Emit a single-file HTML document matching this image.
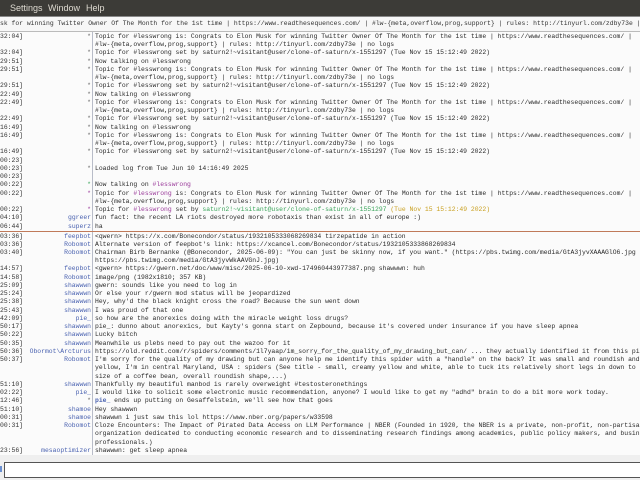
<!DOCTYPE html>
<html><head><meta charset="utf-8"><style>
*{margin:0;padding:0;box-sizing:border-box}
body{width:640px;height:480px;overflow:hidden;background:#efefef;position:relative;font-family:"Liberation Mono",monospace}
#menu{position:absolute;left:0;top:0;width:640px;height:16px;background:#3c3b37;color:#dfdbd2;font:9px "Liberation Sans",sans-serif}
#menu span{position:absolute;top:3px}
#topic{position:absolute;left:0;top:16px;width:640px;height:16px;background:#f7f7f7;border-top:1px solid #888;border-bottom:1px solid #bbb;font-size:6.4px;line-height:14px;color:#333;white-space:pre;overflow:hidden}
#chat{position:absolute;left:0;top:32px;width:640px;height:423px;background:#fbfbfb;overflow:hidden}
#vsep{position:absolute;left:92px;top:0;width:1px;height:423px;background:#b8bcc8}
.r{position:absolute;left:0;height:8.24px;width:640px;font-size:6.4px;line-height:8.24px;white-space:pre;color:#2a2a2a}
.t{position:absolute;left:0;color:#333}
.n{position:absolute;right:549px;color:#4a62b0;text-align:right}
.m{position:absolute;left:95px}
.g{color:#3aa55a}.p{color:#9a3a9a}.y{color:#c9a020}
#mark{position:absolute;left:0;top:198.5px;width:640px;height:1px;background:#c07a5a}
#input{position:absolute;left:4px;top:462px;width:640px;height:16px;background:#fff;border:1px solid #555}
#blue{position:absolute;left:0;top:466px;width:2px;height:6px;background:#6a8fd0}
</style></head><body>
<div id="menu"><span style="left:-3px">r</span><span style="left:10px">Settings</span><span style="left:48px">Window</span><span style="left:86px">Help</span></div>
<div id="topic">sk for winning Twitter Owner Of The Month for the 1st time | https://www.readthesequences.com/ | #lw-{meta,overflow,prog,support} | rules: http://tinyurl.com/zdby73e | no logs</div>
<div id="chat">
<div id="vsep"></div>
<div id="mark"></div>
<div class="r" style="top:1px"><span class="t">32:04]</span><span class="n" style="color:#666">*</span><span class="m">Topic for #lesswrong is: Congrats to Elon Musk for winning Twitter Owner Of The Month for the 1st time | https://www.readthesequences.com/ |</span></div>
<div class="r" style="top:9.24px"><span class="m">#lw-{meta,overflow,prog,support} | rules: http://tinyurl.com/zdby73e | no logs</span></div>
<div class="r" style="top:17.48px"><span class="t">32:04]</span><span class="n" style="color:#666">*</span><span class="m">Topic for #lesswrong set by saturn2!~visitant@user/clone-of-saturn/x-1551297 (Tue Nov 15 15:12:49 2022)</span></div>
<div class="r" style="top:25.72px"><span class="t">29:51]</span><span class="n" style="color:#666">*</span><span class="m">Now talking on #lesswrong</span></div>
<div class="r" style="top:33.96px"><span class="t">29:51]</span><span class="n" style="color:#666">*</span><span class="m">Topic for #lesswrong is: Congrats to Elon Musk for winning Twitter Owner Of The Month for the 1st time | https://www.readthesequences.com/ |</span></div>
<div class="r" style="top:42.2px"><span class="m">#lw-{meta,overflow,prog,support} | rules: http://tinyurl.com/zdby73e | no logs</span></div>
<div class="r" style="top:50.44px"><span class="t">29:51]</span><span class="n" style="color:#666">*</span><span class="m">Topic for #lesswrong set by saturn2!~visitant@user/clone-of-saturn/x-1551297 (Tue Nov 15 15:12:49 2022)</span></div>
<div class="r" style="top:58.68px"><span class="t">22:49]</span><span class="n" style="color:#666">*</span><span class="m">Now talking on #lesswrong</span></div>
<div class="r" style="top:66.92px"><span class="t">22:49]</span><span class="n" style="color:#666">*</span><span class="m">Topic for #lesswrong is: Congrats to Elon Musk for winning Twitter Owner Of The Month for the 1st time | https://www.readthesequences.com/ |</span></div>
<div class="r" style="top:75.16px"><span class="m">#lw-{meta,overflow,prog,support} | rules: http://tinyurl.com/zdby73e | no logs</span></div>
<div class="r" style="top:83.4px"><span class="t">22:49]</span><span class="n" style="color:#666">*</span><span class="m">Topic for #lesswrong set by saturn2!~visitant@user/clone-of-saturn/x-1551297 (Tue Nov 15 15:12:49 2022)</span></div>
<div class="r" style="top:91.64px"><span class="t">16:49]</span><span class="n" style="color:#666">*</span><span class="m">Now talking on #lesswrong</span></div>
<div class="r" style="top:99.88px"><span class="t">16:49]</span><span class="n" style="color:#666">*</span><span class="m">Topic for #lesswrong is: Congrats to Elon Musk for winning Twitter Owner Of The Month for the 1st time | https://www.readthesequences.com/ |</span></div>
<div class="r" style="top:108.12px"><span class="m">#lw-{meta,overflow,prog,support} | rules: http://tinyurl.com/zdby73e | no logs</span></div>
<div class="r" style="top:116.36px"><span class="t">16:49]</span><span class="n" style="color:#666">*</span><span class="m">Topic for #lesswrong set by saturn2!~visitant@user/clone-of-saturn/x-1551297 (Tue Nov 15 15:12:49 2022)</span></div>
<div class="r" style="top:124.6px"><span class="t">00:23]</span></div>
<div class="r" style="top:132.84px"><span class="t">00:23]</span><span class="n" style="color:#666">*</span><span class="m">Loaded log from Tue Jun 10 14:16:49 2025</span></div>
<div class="r" style="top:141.08px"><span class="t">00:23]</span></div>
<div class="r" style="top:149.32px"><span class="t">00:22]</span><span class="n g">*</span><span class="m">Now talking on <span class="p">#lesswrong</span></span></div>
<div class="r" style="top:157.56px"><span class="t">00:22]</span><span class="n p">*</span><span class="m">Topic for <span class="p">#lesswrong</span> is: Congrats to Elon Musk for winning Twitter Owner Of The Month for the 1st time | https://www.readthesequences.com/ |</span></div>
<div class="r" style="top:165.8px"><span class="m">#lw-{meta,overflow,prog,support} | rules: http://tinyurl.com/zdby73e | no logs</span></div>
<div class="r" style="top:174.04px"><span class="t">00:22]</span><span class="n p">*</span><span class="m">Topic for <span class="p">#lesswrong</span> set by <span class="g">saturn2!~visitant@user/clone-of-saturn/x-1551297</span> <span class="y">(Tue Nov 15 15:12:49 2022)</span></span></div>
<div class="r" style="top:182.28px"><span class="t">04:10]</span><span class="n">ggreer</span><span class="m">fun fact: the recent LA riots destroyed more robotaxis than exist in all of europe :)</span></div>
<div class="r" style="top:190.52px"><span class="t">06:44]</span><span class="n">superz</span><span class="m">ha</span></div>
<div class="r" style="top:200.5px"><span class="t">03:36]</span><span class="n">feepbot</span><span class="m">&lt;qwern&gt; https://x.com/Bonecondor/status/1932105333068269834 tirzepatide in action</span></div>
<div class="r" style="top:208.74px"><span class="t">03:36]</span><span class="n">Robomot</span><span class="m">Alternate version of feepbot's link: https://xcancel.com/Bonecondor/status/1932105333868269834</span></div>
<div class="r" style="top:216.98px"><span class="t">03:40]</span><span class="n">Robomot</span><span class="m">Chairman Birb Bernanke (@Bonecondor, 2025-06-09): "You can just be skinny now, if you want." (https://pbs.twimg.com/media/GtA3jyvXAAAGlO6.jpg</span></div>
<div class="r" style="top:225.22px"><span class="m">https://pbs.twimg.com/media/GtA3jyvWkAAVGnJ.jpg)</span></div>
<div class="r" style="top:233.46px"><span class="t">14:57]</span><span class="n">feepbot</span><span class="m">&lt;gwern&gt; https://gwern.net/doc/www/misc/2025-06-10-xwd-174960443977387.png shawwwn: huh</span></div>
<div class="r" style="top:241.7px"><span class="t">14:58]</span><span class="n">Robomot</span><span class="m">image/png (1982x1810; 357 KB)</span></div>
<div class="r" style="top:249.94px"><span class="t">25:09]</span><span class="n">shawwwn</span><span class="m">gwern: sounds like you need to log in</span></div>
<div class="r" style="top:258.18px"><span class="t">25:24]</span><span class="n">shawwwn</span><span class="m">Or else your r/gwern mod status will be jeopardized</span></div>
<div class="r" style="top:266.42px"><span class="t">25:38]</span><span class="n">shawwwn</span><span class="m">Hey, why'd the black knight cross the road? Because the sun went down</span></div>
<div class="r" style="top:274.66px"><span class="t">25:43]</span><span class="n">shawwwn</span><span class="m">I was proud of that one</span></div>
<div class="r" style="top:282.9px"><span class="t">42:09]</span><span class="n">pie_</span><span class="m">so how are the anorexics doing with the miracle weight loss drugs?</span></div>
<div class="r" style="top:291.14px"><span class="t">50:17]</span><span class="n">shawwwn</span><span class="m">pie_: dunno about anorexics, but Kayty's gonna start on Zepbound, because it's covered under insurance if you have sleep apnea</span></div>
<div class="r" style="top:299.38px"><span class="t">50:22]</span><span class="n">shawwwn</span><span class="m">Lucky bitch</span></div>
<div class="r" style="top:307.62px"><span class="t">50:35]</span><span class="n">shawwwn</span><span class="m">Meanwhile us plebs need to pay out the wazoo for it</span></div>
<div class="r" style="top:315.86px"><span class="t">50:36]</span><span class="n">Obormot\Arcturus</span><span class="m">https://old.reddit.com/r/spiders/comments/1l7yaap/im_sorry_for_the_quality_of_my_drawing_but_can/ ... they actually identified it from this pic</span></div>
<div class="r" style="top:324.1px"><span class="t">50:37]</span><span class="n">Robomot</span><span class="m">I'm sorry for the quality of my drawing but can anyone help me identify this spider with a "handle" on the back? It was small and roundish and</span></div>
<div class="r" style="top:332.34px"><span class="m">yellow, I'm in central Maryland, USA : spiders (See title - small, creamy yellow and white, able to tuck its relatively short legs in down to the</span></div>
<div class="r" style="top:340.58px"><span class="m">size of a coffee bean, overall roundish shape,...)</span></div>
<div class="r" style="top:348.82px"><span class="t">51:10]</span><span class="n">shawwwn</span><span class="m">Thankfully my beautiful manbod is rarely overweight #testosteronethings</span></div>
<div class="r" style="top:357.06px"><span class="t">02:22]</span><span class="n">pie_</span><span class="m">I would like to solicit some electronic music recommendation, anyone? I would like to get my "adhd" brain to do a bit more work today.</span></div>
<div class="r" style="top:365.3px"><span class="t">12:46]</span><span class="n" style="color:#666">*</span><span class="m"><b style="color:#4a62b0;font-weight:bold">pie_</b> ends up putting on Gesaffelstein, we'll see how that goes</span></div>
<div class="r" style="top:373.54px"><span class="t">51:10]</span><span class="n">shamoe</span><span class="m">Hey shawwwn</span></div>
<div class="r" style="top:381.78px"><span class="t">00:31]</span><span class="n">shamoe</span><span class="m">shawwwn i just saw this lol https://www.nber.org/papers/w33598</span></div>
<div class="r" style="top:390.02px"><span class="t">00:31]</span><span class="n">Robomot</span><span class="m">Cloze Encounters: The Impact of Pirated Data Access on LLM Performance | NBER (Founded in 1920, the NBER is a private, non-profit, non-partisan</span></div>
<div class="r" style="top:398.26px"><span class="m">organization dedicated to conducting economic research and to disseminating research findings among academics, public policy makers, and business</span></div>
<div class="r" style="top:406.5px"><span class="m">professionals.)</span></div>
<div class="r" style="top:414.74px"><span class="t">23:56]</span><span class="n">mesaoptimizer</span><span class="m">shawwwn: get sleep apnea</span></div>
</div>
<div id="blue"></div>
<div id="input"></div>
</body></html>
